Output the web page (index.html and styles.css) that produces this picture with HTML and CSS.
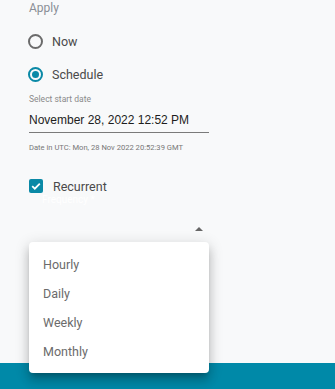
FILE: index.html
```html
<!DOCTYPE html>
<html>
<head>
<meta charset="utf-8">
<link rel="stylesheet" href="styles.css">
</head>
<body>
<div class="page">
  <div class="form">
    <div class="section-label">Apply</div>
    <label class="radio-row">
      <span class="radio"></span>
      <span class="opt-text">Now</span>
    </label>
    <label class="radio-row">
      <span class="radio checked"><span class="dot"></span></span>
      <span class="opt-text">Schedule</span>
    </label>
    <div class="field">
      <div class="field-label">Select start date</div>
      <div class="field-value">November 28, 2022 12:52 PM</div>
      <div class="field-hint">Date in UTC: Mon, 28 Nov 2022 20:52:39 GMT</div>
    </div>
    <label class="check-row">
      <span class="checkbox">
        <svg width="14" height="14" viewBox="0 0 14 14"><path d="M3.2 7.2 L5.8 9.7 L10.8 4.6" fill="none" stroke="#fff" stroke-width="1.8"/></svg>
      </span>
      <span class="opt-text">Recurrent</span>
    </label>
    <div class="select">
      <div class="select-label">Frequency *</div>
      <div class="select-arrow"></div>
    </div>
  </div>
  <div class="footer"></div>
  <ul class="menu">
    <li>Hourly</li>
    <li>Daily</li>
    <li>Weekly</li>
    <li>Monthly</li>
  </ul>
</div>
</body>
</html>
```
FILE: styles.css
```css
html, body {
  margin: 0;
  padding: 0;
}
body {
  background: #f8f9fa;
  font-family: Roboto, "Noto Sans", sans-serif;
  width: 335px;
  height: 389px;
  overflow: hidden;
}
.page {
  position: relative;
  height: 389px;
  display: flex;
  flex-direction: column;
}
.form {
  flex: 1;
  padding: 0 0 0 29px;
}
.section-label {
  font-size: 12px;
  color: #8a8f96;
  line-height: 16px;
}
.radio-row {
  display: flex;
  align-items: center;
  gap: 9px;
  height: 20px;
  margin-left: -1px;
}
.radio-row:first-of-type { margin-top: 15px; }
.radio-row + .radio-row { margin-top: 13px; }
.radio {
  width: 15px;
  height: 15px;
  border: 2px solid #6b6b6b;
  border-radius: 50%;
  box-sizing: border-box;
  display: flex;
  align-items: center;
  justify-content: center;
}
.radio.checked { border-color: #0a89a6; }
.radio .dot {
  width: 7px;
  height: 7px;
  border-radius: 50%;
  background: #0a89a6;
}
.opt-text {
  font-size: 12.5px;
  color: #4a4a4a;
}
.field {
  margin-top: 9px;
  width: 180px;
}
.field-label {
  font-size: 8.5px;
  color: #8a8a8a;
  line-height: 12px;
}
.field-value {
  font-family: "Liberation Sans", Arial, sans-serif;
  font-size: 12px;
  color: #1d1d1d;
  line-height: 14px;
  padding: 8px 0 5px;
  border-bottom: 1px solid #7a7a7a;
}
.field-hint {
  font-size: 7.6px;
  color: #777;
  margin-top: 10px;
  line-height: 10px;
}
.check-row {
  display: flex;
  align-items: center;
  gap: 10px;
  margin-top: 26px;
  height: 14px;
}
.checkbox {
  width: 14px;
  height: 14px;
  background: #0a89a6;
  border-radius: 2px;
  display: flex;
}
.select {
  width: 180px;
  position: relative;
  height: 40px;
}
.select-label {
  font-size: 10px;
  color: #ffffff;
  padding-left: 13px;
  line-height: 14px;
}
.select-arrow {
  position: absolute;
  right: 6px;
  top: 34px;
  width: 0;
  height: 0;
  border-left: 4px solid transparent;
  border-right: 4px solid transparent;
  border-bottom: 4px solid #666;
}
.footer {
  height: 26px;
  background: #0089a8;
}
.menu {
  position: absolute;
  left: 29px;
  top: 242px;
  width: 180px;
  margin: 0;
  padding: 8px 0;
  list-style: none;
  background: #fff;
  border-radius: 4px;
  box-shadow: 0 5px 5px -3px rgba(0,0,0,.2), 0 8px 10px 1px rgba(0,0,0,.14), 0 3px 14px 2px rgba(0,0,0,.12);
  box-sizing: border-box;
  height: 131px;
}
.menu li {
  height: 29px;
  line-height: 29px;
  padding-left: 14px;
  font-size: 12.5px;
  color: #6b6b6b;
}
```
